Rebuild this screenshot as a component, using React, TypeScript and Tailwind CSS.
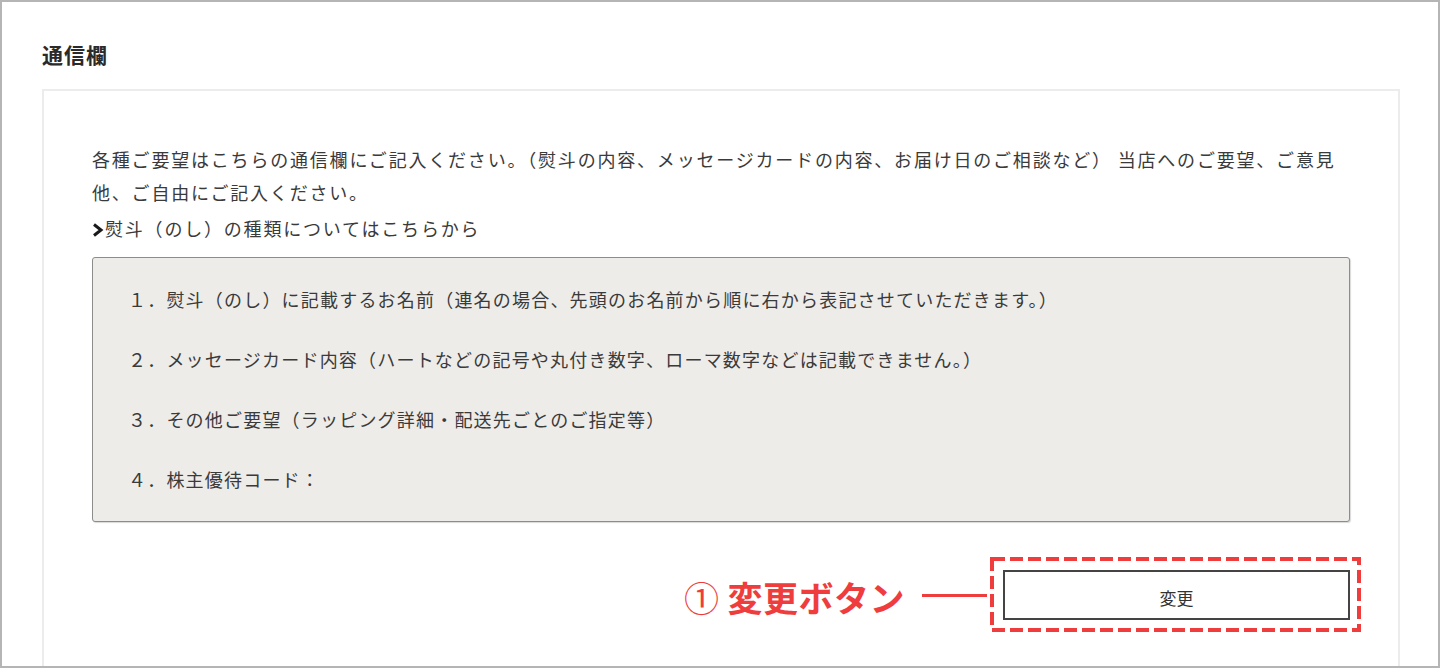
const NOTES = [
  "１．熨斗（のし）に記載するお名前（連名の場合、先頭のお名前から順に右から表記させていただきます。）",
  "２．メッセージカード内容（ハートなどの記号や丸付き数字、ローマ数字などは記載できません。）",
  "３．その他ご要望（ラッピング詳細・配送先ごとのご指定等）",
  "４．株主優待コード：",
];

function Chevron() {
  return (
    <svg width="12" height="14" viewBox="0 0 12 14" className="mr-[1px] inline-block align-[-1px]">
      <polyline points="2,1.5 9,7 2,12.5" fill="none" stroke="#1a1a1a" strokeWidth="3" strokeLinejoin="miter" />
    </svg>
  );
}

function DashedFrame() {
  return (
    <svg width="371" height="75" className="pointer-events-none absolute left-[-13px] top-[-13px]">
      <rect x="2" y="2" width="367" height="71" fill="none" stroke="#ef3d3d" strokeWidth="4" strokeDasharray="13 5" />
    </svg>
  );
}

export default function App() {
  return (
    <div className="h-[668px] w-[1440px] overflow-hidden border-2 border-[#b5b5b5] bg-white pl-[40px] pr-[38px] font-['Noto_Sans_CJK_JP',sans-serif] text-[#3a3a3a]">
      {/* Heading */}
      <h2 className="pt-[36px] text-[21px] font-bold leading-[32px] tracking-[1px] text-[#2a2a2a]">通信欄</h2>

      {/* Card */}
      <div className="mt-[19px] border-2 border-[#ececec] px-[48px] pt-[52px] pb-[80px]">
        <p className="text-[18px] leading-[33px] tracking-[0.1em]">
          各種ご要望はこちらの通信欄にご記入ください。（熨斗の内容、メッセージカードの内容、お届け日のご相談など） 当店へのご要望、ご意見他、ご自由にご記入ください。
        </p>
        <p className="mt-[3px] text-[18px] leading-[33px] tracking-[0.1em]">
          <Chevron />
          熨斗（のし）の種類についてはこちらから
        </p>

        {/* Textarea */}
        <div className="mt-3 flex flex-col gap-[30px] rounded-[3px] border border-[#8c8c8c] bg-[#eeece9] pl-[35px] pt-[26px] pb-[27px] shadow-[1px_1px_1px_rgba(0,0,0,0.15)]">
          {NOTES.map((n) => (
            <div key={n} className="text-[18px] leading-[30px] tracking-[1.2px]">
              {n}
            </div>
          ))}
        </div>

        {/* Submit row */}
        <div className="mt-[48px] flex items-center justify-end">
          <div className="mt-[4px] flex items-center text-[35px] font-bold leading-[40px] tracking-[0.5px] text-[#ef3d3d]">
            <span className="font-normal">①</span>
            <span className="ml-[8px]">変更ボタン</span>
          </div>
          <div className="ml-[17px] h-[3px] w-[65px] bg-[#ef3d3d]" />
          <div className="relative ml-[16px]">
            <DashedFrame />
            <button className="h-[50px] w-[347px] border-2 border-[#444444] bg-white pt-[5px] text-[17px] text-[#333333]">
              変更
            </button>
          </div>
        </div>
      </div>
    </div>
  );
}
